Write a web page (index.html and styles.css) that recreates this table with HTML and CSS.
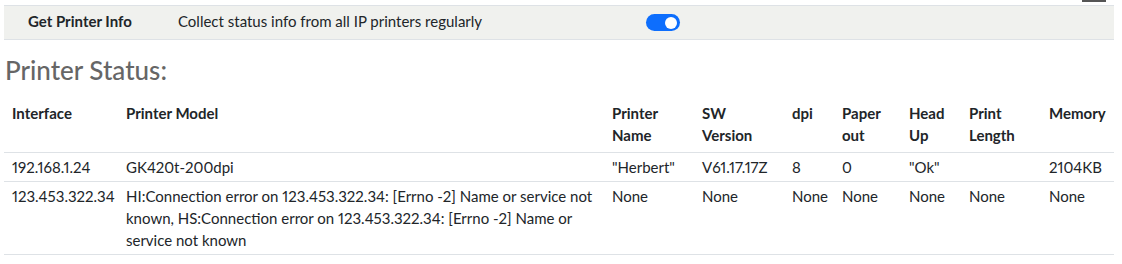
FILE: index.html
```html
<!DOCTYPE html>
<html lang="en">
<head>
<meta charset="utf-8">
<title>Printer Status</title>
<link rel="stylesheet" href="styles.css">
</head>
<body>
<div class="page">
  <div class="topstrip"><span class="btn-edge"></span></div>
  <div class="setting">
    <div class="setting-label">Get Printer Info</div>
    <div class="setting-desc">Collect status info from all IP printers regularly</div>
    <div class="setting-ctrl"><span class="switch" role="switch" aria-checked="true"></span></div>
  </div>
  <h4 class="section-title">Printer Status:</h4>
  <table class="status-table">
    <colgroup>
      <col class="c-if"><col class="c-model"><col class="c-name"><col class="c-sw"><col class="c-dpi"><col class="c-paper"><col class="c-head"><col class="c-len"><col class="c-mem">
    </colgroup>
    <thead>
      <tr>
        <th>Interface</th>
        <th>Printer Model</th>
        <th>Printer Name</th>
        <th>SW Version</th>
        <th>dpi</th>
        <th>Paper out</th>
        <th>Head Up</th>
        <th>Print Length</th>
        <th>Memory</th>
      </tr>
    </thead>
    <tbody>
      <tr>
        <td>192.168.1.24</td>
        <td>GK420t-200dpi</td>
        <td>"Herbert"</td>
        <td>V61.17.17Z</td>
        <td>8</td>
        <td>0</td>
        <td>"Ok"</td>
        <td></td>
        <td>2104KB</td>
      </tr>
      <tr>
        <td>123.453.322.34</td>
        <td>HI:Connection error on 123.453.322.34: [Errno -2] Name or service not known, HS:Connection error on 123.453.322.34: [Errno -2] Name or service not known</td>
        <td>None</td>
        <td>None</td>
        <td>None</td>
        <td>None</td>
        <td>None</td>
        <td>None</td>
        <td>None</td>
      </tr>
    </tbody>
  </table>
</div>
</body>
</html>
```

FILE: styles.css
```css
* { box-sizing: border-box; }
html, body { margin: 0; padding: 0; background: #fff; }
body {
  font-family: Lato, "Liberation Sans", sans-serif;
  font-size: 15px;
  line-height: 22px;
  color: #212529;
  font-variant-numeric: proportional-nums;
}
.page {
  margin-left: 4px;
  width: 1110px;
}
.topstrip {
  height: 5px;
  display: flex;
  justify-content: flex-end;
  padding-right: 8px;
}
.btn-edge {
  display: block;
  width: 24px;
  height: 2px;
  background: #555;
}
.setting {
  display: grid;
  grid-template-columns: 150px 468px auto;
  align-items: center;
  height: 35px;
  padding-left: 24px;
  padding-bottom: 3px;
  background: #f0f1ee;
  border-top: 1px solid #dee2e6;
  border-bottom: 1px solid #dee2e6;
}
.setting-label { font-weight: 700; }
.setting-ctrl { display: flex; align-items: center; padding-top: 3px; }
.switch {
  position: relative;
  display: block;
  width: 34px;
  height: 17px;
  border-radius: 9px;
  background: #0d6efd;
}
.switch::after {
  content: "";
  position: absolute;
  right: 3px;
  top: 2.5px;
  width: 12px;
  height: 12px;
  border-radius: 50%;
  background: #fff;
}
.section-title {
  margin: 15px 0 12px 1px;
  font-size: 26px;
  line-height: 31px;
  font-weight: 500;
  color: #666;
}
.status-table {
  width: 1110px;
  table-layout: fixed;
  border-collapse: collapse;
}
.c-if { width: 114px; }
.c-model { width: 486px; }
.c-name { width: 90px; }
.c-sw { width: 90px; }
.c-dpi { width: 50px; }
.c-paper { width: 67px; }
.c-head { width: 60px; }
.c-len { width: 80px; }
.c-mem { width: 73px; }
.status-table th,
.status-table td {
  text-align: left;
  vertical-align: top;
  padding: 3px 8px;
  border-bottom: 1px solid #dee2e6;
}
.status-table th {
  font-weight: 700;
  padding: 4px 8px 6px;
}
```
